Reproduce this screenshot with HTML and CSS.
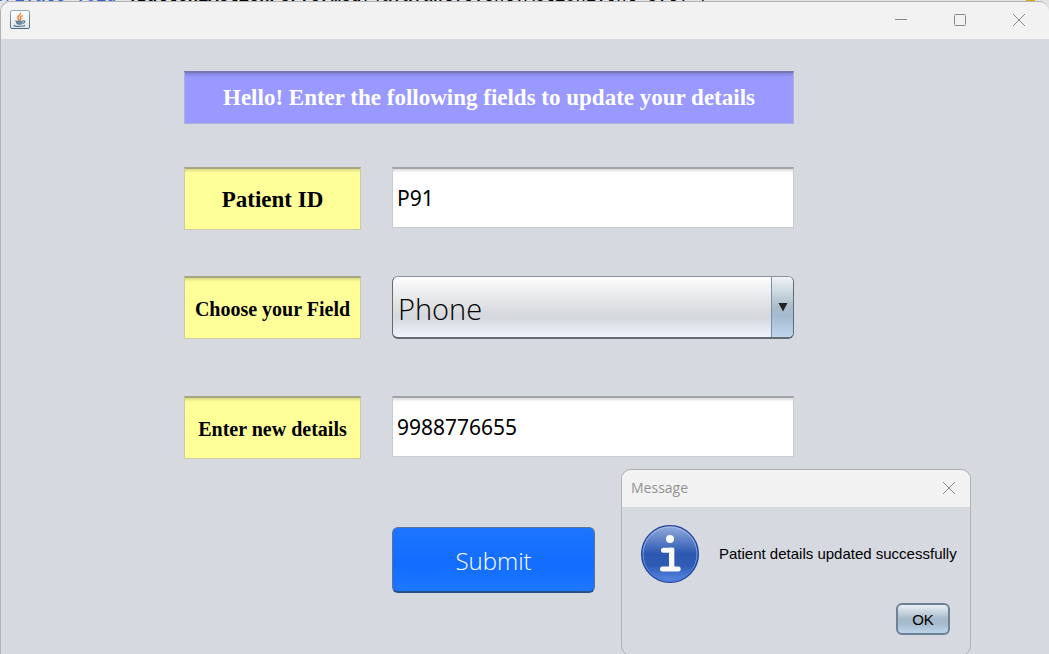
FILE: index.html
```html
<!DOCTYPE html>
<html lang="en">
<head>
<meta charset="utf-8">
<title>Update patient details</title>
<link rel="stylesheet" href="styles.css">
</head>
<body>
<div class="editor" aria-hidden="true">
  <div class="code"><span class="keyword">private void </span><b>jButton1ActionPerformed</b>(java.awt.event.ActionEvent evt) {</div>
  <span class="marker"></span>
</div>
<main class="window">
  <header class="titlebar">
    <svg class="app-icon" viewBox="0 0 20 20" aria-hidden="true">
      <defs><linearGradient id="tile" x1="0" y1="0" x2="0" y2="1"><stop offset="0" stop-color="#fff"/><stop offset="1" stop-color="#e2e6e9"/></linearGradient>
      <linearGradient id="edge" x1="0" y1="0" x2="0" y2="1"><stop offset="0" stop-color="#8fa8bd"/><stop offset="1" stop-color="#4a6880"/></linearGradient></defs>
      <rect x=".5" y=".5" width="19" height="18" rx="1.5" fill="url(#tile)" stroke="url(#edge)"/>
      <g fill="none" stroke-linecap="round">
        <path d="M10.5 3.2C11 5.2 7.2 5.8 7.6 7.6c.2 1 1.4 1.5 1.4 2.6M12.2 5.8c-1.8.9-2.5 1.5-1.7 2.5.5.7.3 1.3-.4 1.8" stroke="#ea8a3e" stroke-width="1.5"/>
        <path d="M5.8 11c1.2.6 5.4.6 7.4 0M6.4 12.5c1.5.5 4.2.5 5.8 0M7 13.8c1.3.4 3.2.4 4.6 0M4.4 15.4c-.9.5.8 1 4.7 1s6-.6 5.2-1.1M13.2 10.9c2.4-.4 2 1.8-.2 2.4" stroke="#56788f" stroke-width="1.2"/>
      </g>
    </svg>
    <div class="window-controls">
      <button type="button" aria-label="Minimize"><svg viewBox="0 0 12 12"><path d="M0 5.5h12"/></svg></button>
      <button type="button" aria-label="Maximize"><svg viewBox="0 0 12 12"><rect x=".5" y=".5" width="11" height="11" rx="1"/></svg></button>
      <button type="button" aria-label="Close"><svg viewBox="0 0 12 12"><path d="M0 0l12 12M12 0L0 12"/></svg></button>
    </div>
  </header>
  <form class="form">
    <h1 class="panel banner">Hello! Enter the following fields to update your details</h1>
    <div class="row id-row">
      <label class="panel tag tag-large" for="patient">Patient ID</label>
      <input class="panel field" id="patient" type="text" value="P91">
    </div>
    <div class="row choice-row">
      <label class="panel tag" for="choice">Choose your Field</label>
      <div class="picker">
        <select id="choice"><option>Phone</option></select>
        <span class="picker-arrow"><svg viewBox="0 0 10 10"><path d="M.5 1h9L5 9.5z"/></svg></span>
      </div>
    </div>
    <div class="row detail-row">
      <label class="panel tag" for="details">Enter new details</label>
      <input class="panel field" id="details" type="text" value="9988776655">
    </div>
    <div class="row submit-row">
      <button class="submit" type="button">Submit</button>
    </div>
  </form>
</main>
<section class="dialog" role="dialog" aria-labelledby="dialog-title">
  <header class="dialog-bar">
    <h2 id="dialog-title">Message</h2>
    <button type="button" aria-label="Close message"><svg viewBox="0 0 12 12"><path d="M0 0l12 12M12 0L0 12"/></svg></button>
  </header>
  <div class="dialog-body">
    <svg class="info" viewBox="0 0 58 58" aria-hidden="true">
      <defs><linearGradient id="blue" x1="0" y1="0" x2="0" y2="1"><stop offset="0" stop-color="#96aedd"/><stop offset=".3" stop-color="#5479c3"/><stop offset=".5" stop-color="#2c58b0"/><stop offset=".7" stop-color="#2f5bb5"/><stop offset="1" stop-color="#5b8be6"/></linearGradient>
      <linearGradient id="rim" x1="0" y1="0" x2="0" y2="1"><stop offset="0" stop-color="#a9bde4"/><stop offset="1" stop-color="#4474d4"/></linearGradient></defs>
      <circle cx="29" cy="29" r="28.4" fill="url(#blue)" stroke="#1d419b" stroke-width="1.2"/>
      <circle cx="29" cy="29" r="27" fill="none" stroke="url(#rim)" stroke-width="1"/>
      <circle cx="29" cy="14" r="4" fill="#fafafa"/>
      <path d="M22.5 25.3h8.2v18.5M21.5 44h15.7" fill="none" stroke="#fafafa" stroke-width="5" stroke-linecap="round"/>
      <path d="M28 22.8h3q2.2 0 2.2 2.4v19h-5.2z" fill="#fafafa"/>
    </svg>
    <p>Patient details updated successfully</p>
  </div>
  <footer class="dialog-actions"><button class="ok" type="button">OK</button></footer>
</section>
</body>
</html>
```
FILE: styles.css
```css
* { box-sizing: border-box; }

body {
  margin: 0;
  min-height: 100vh;
  overflow: hidden;
  position: relative;
  background: #c4c6ca;
  font-family: "Liberation Sans", Arial, sans-serif;
}

h1, h2, p { margin: 0; }
button { font: inherit; padding: 0; }

.editor {
  position: absolute;
  top: 0;
  left: 0;
  right: 0;
  height: 40px;
  background: #e4e4e4;
}

.code {
  position: absolute;
  left: -6px;
  top: -13px;
  font: 17px/20px "Liberation Mono", monospace;
  white-space: pre;
}

.keyword { color: #2f62d0; }

.marker {
  position: absolute;
  top: 0;
  right: 14px;
  width: 9px;
  height: 2px;
  background: #e0a800;
}

.window {
  position: relative;
  margin-top: 1px;
  min-height: calc(100vh - 1px);
  border: 1px solid #b0b2b4;
  border-width: 1px 0 0 1px;
  border-radius: 10px 10px 0 0;
  background: #d6d9e0;
  overflow: hidden;
}

.titlebar {
  height: 37px;
  padding: 0 24px 1px 9px;
  display: flex;
  justify-content: space-between;
  align-items: center;
  background: #f2f2f2;
}

.app-icon { width: 20px; height: 20px; }
.window-controls { display: flex; gap: 47px; }

.window-controls button,
.dialog-bar button {
  width: 12px;
  height: 12px;
  border: 0;
  background: none;
}

.window-controls svg,
.dialog-bar svg {
  display: block;
  width: 12px;
  height: 12px;
  fill: none;
  stroke: #888;
  overflow: visible;
}

.form {
  display: flex;
  flex-direction: column;
  padding: 32px 255px 0 183px;
}

.panel {
  border: 1px solid #c8cbd0;
  border-top: 2px solid #a2a3a8;
  box-shadow: inset 0 4px 3px -2px rgba(0, 0, 0, .14);
}

.banner {
  height: 53px;
  display: grid;
  place-items: center;
  color: #fff;
  background: #99f;
  border-color: #7777b5 #b0b0df #b0b0df;
  font: bold 23px/26px "Liberation Serif", "Times New Roman", serif;
}

.row {
  display: grid;
  grid-template-columns: 177px 1fr;
  align-items: start;
  column-gap: 31px;
}

.id-row { margin-top: 43px; }
.choice-row { margin-top: 46px; }
.detail-row { margin-top: 57px; }
.submit-row { margin-top: 68px; }

.tag {
  height: 63px;
  padding-top: 1px;
  display: grid;
  place-items: center;
  background: #ff9;
  border-color: #a5a585 #cccba5 #cccba5;
  font: bold 20px/22px "Liberation Serif", "Times New Roman", serif;
}

.tag-large { font-size: 23px; }

.field {
  width: 100%;
  height: 61px;
  padding: 0 4px;
  border-radius: 0;
  background: #fff;
  color: #000;
  font: 21px/28px "Noto Sans", sans-serif;
  outline: 0;
}

.picker {
  height: 63px;
  display: grid;
  grid-template-columns: 1fr 22px;
  border: 1px solid #646972;
  border-top-color: #8b929d;
  border-bottom-width: 2px;
  border-radius: 6px;
  overflow: hidden;
  background: linear-gradient(#fdfdfd, #dddfe2 50%, #d4d7dc 67%, #f0f3fc);
}

.picker select {
  grid-area: 1 / 1 / 2 / 3;
  width: 100%;
  appearance: none;
  border: 0;
  padding: 4px 28px 0 5px;
  background: none;
  color: #000;
  font: 300 29px/40px "Open Sans", sans-serif;
  outline: 0;
}

.picker-arrow {
  grid-area: 1 / 2;
  display: grid;
  place-items: center;
  border-left: 1px solid #7891a8;
  background: linear-gradient(#eff3f6, #a9bccb 50%, #a5bbcf 65%, #bed6ec);
  pointer-events: none;
}

.picker-arrow svg { width: 10px; height: 10px; fill: #222; }

.submit {
  grid-column: 2;
  width: 203px;
  height: 66px;
  padding-top: 2px;
  border: 1px solid #5a7398;
  border-bottom: 2px solid #294f89;
  border-radius: 6px;
  background: linear-gradient(#1d75ff, #126cff 60%, #1e78ff);
  color: #fff;
  font: 24px/34px "Open Sans", sans-serif;
  font-weight: 300;
}

.dialog {
  position: absolute;
  top: 469px;
  left: 621px;
  width: 350px;
  border: 1px solid #aeb0b4;
  border-radius: 10px;
  background: #d6d9e0;
  overflow: hidden;
}

.dialog-bar {
  height: 37px;
  padding: 0 15px 1px 9px;
  display: flex;
  align-items: center;
  justify-content: space-between;
  background: #f2f2f2;
}

.dialog-bar h2 {
  color: #929292;
  font: 14px/20px "Open Sans", sans-serif;
}

.dialog-body {
  display: flex;
  align-items: center;
  gap: 20px;
  padding: 18px 15px 0 19px;
}

.info { width: 58px; height: 58px; flex: none; }
.dialog-body p { font-size: 15px; line-height: 18px; white-space: nowrap; }

.dialog-actions {
  display: flex;
  justify-content: flex-end;
  padding: 20px 20px 20px 0;
}

.ok {
  width: 54px;
  height: 32px;
  border: 2px solid #6d8194;
  border-radius: 6px;
  background: linear-gradient(#eaf0f5, #a6b9c8 50%, #a5bacb 65%, #bcd4ea);
  color: #000;
  font-size: 15px;
}
```
